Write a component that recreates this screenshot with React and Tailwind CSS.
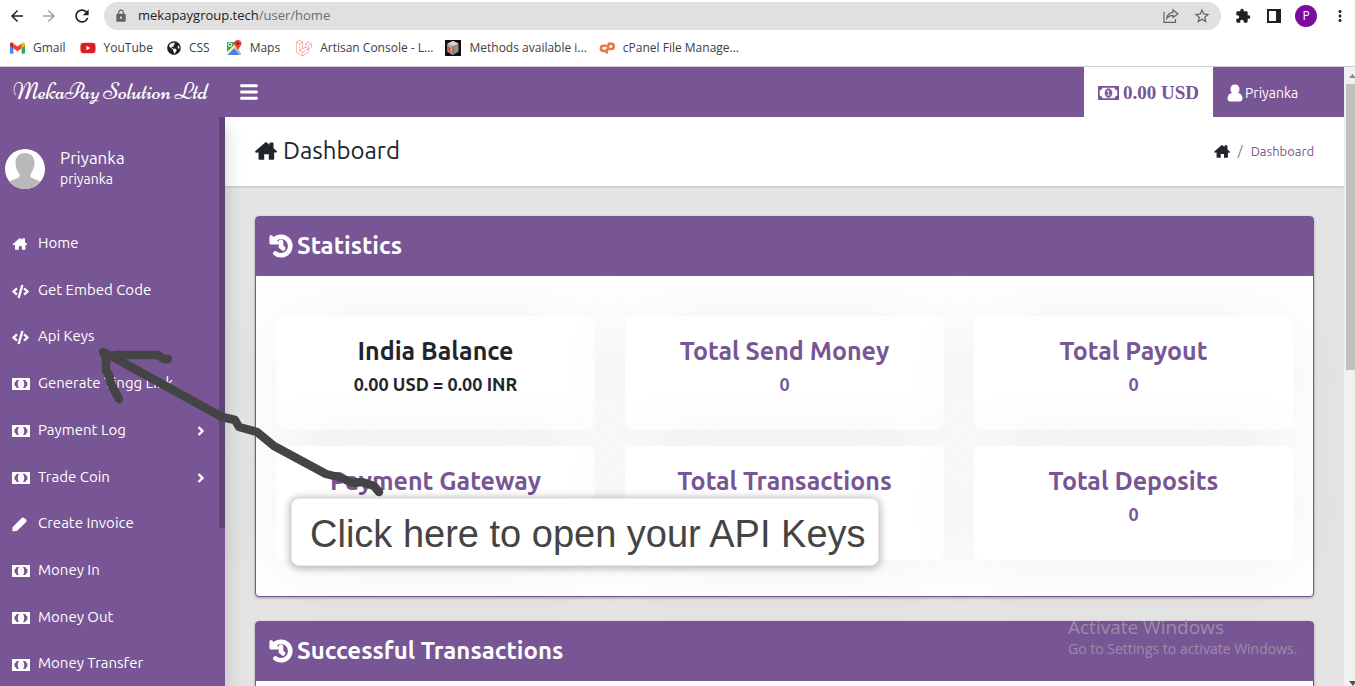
import React from "react";
import { FaYoutube, FaLaravel, FaGlobeAmericas, FaCode, FaHistory, FaBars } from "react-icons/fa";
import { MdArrowBack, MdArrowForward, MdRefresh, MdLock, MdStarBorder, MdExtension, MdMoreVert } from "react-icons/md";

function MoneyIcon({ className }) {
  return (
    <svg viewBox="0 256 1920 1280" className={className} fill="currentColor" stroke="currentColor" strokeWidth="50" aria-hidden="true">
      <path d="M768 1152h384v-96h-128v-448h-114l-148 137 77 80q42-37 55-57h2v288h-128v96zm512-256q0 70-21 142t-59.5 134-101.5 101-138 39-138-39-101.5-101-59.5-134-21-142 21-142 59.5-134 101.5-101 138-39 138 39 101.5 101 59.5 134 21 142zm512 256v-512q-106 0-181-75t-75-181h-1152q0 106-75 181t-181 75v512q106 0 181 75t75 181h1152q0-106 75-181t181-75zm128-832v1152q0 26-19 45t-45 19h-1792q-26 0-45-19t-19-45v-1152q0-26 19-45t45-19h1792q26 0 45 19t19 45z" />
    </svg>
  );
}

function SmallMoneyIcon({ className }) {
  return (
    <svg viewBox="0 0 18 12" className={className} aria-hidden="true">
      <rect width="18" height="12" rx="0.5" fill="currentColor" />
      <path d="M4.600 2Q4.200 3.800 2.600 4.200v3.600q1.600.4 2 2.200h8.800q.4-1.800 2-2.200V4.200q-1.600-.4-2-2.200Z" fill="#785594" />
      <ellipse cx="9" cy="6" rx="3.200" ry="4.600" fill="currentColor" />
      <path d="M8.600 3.800h.9v4.400h-.9Z" fill="#785594" opacity="0.150" />
    </svg>
  );
}

function HomeIcon({ className }) {
  return (
    <svg viewBox="0 0 22 18" className={className} fill="currentColor" aria-hidden="true">
      <path d="M10.200.5q.8-.6 1.600 0L14.500 2.800V1.300q0-.8.800-.8h2.400q.8 0 .8.800v4.900l3.200 2.900q.5.600 0 1.200t-1.200.3l-1.300-.3v6.400q0 1-1 1h-4.400v-5.400H9.200v5.400H4.500q-1 0-1-1v-6.400l-1.800.4q-.8 0-1.300-.5t0-1.200Z" />
    </svg>
  );
}

function PenIcon({ className }) {
  return (
    <svg viewBox="0 0 16 16" className={className} fill="currentColor" aria-hidden="true">
      <path d="M.8 10.600 9.800 1.500q1.200-1.100 2.500-.8l2.800 2q1 1.200-.3 2.800L5.800 14.400q-.6.600-1.400.6L1 15.300q-.6 0-.6-.6l.1-3.300q0-.5.3-.8Z" />
    </svg>
  );
}

function UserIcon({ className }) {
  return (
    <svg viewBox="0 0 16 18" className={className} fill="currentColor" aria-hidden="true">
      <path d="M8 .5c2.800 0 4.500 2.100 4.500 4.600 0 1.600-.6 3-1.500 3.900 3 .4 4.500 2.600 4.500 5.300 0 2-.9 3.200-2.500 3.200H3C1.400 17.500.5 16.300.5 14.300.5 11.600 2 9.400 5 9c-.9-.9-1.500-2.300-1.500-3.900C3.500 2.600 5.200.5 8 .5Z" />
    </svg>
  );
}

function GmailIcon() {
  return (
    <svg viewBox="0 0 16 12" className="w-[15px] h-3" aria-hidden="true">
      <path d="M0 2v9q0 1 1 1h2.600V4.500Z" fill="#4285f4" />
      <path d="M16 2v9q0 1-1 1h-2.600V4.500Z" fill="#34a853" />
      <path d="M12.400 1.200v5.100L16 3.600V1.800C16 .2 14.500-.4 13.200.5Z" fill="#fbbc04" />
      <path d="M3.600 6.300V1.100L8 4.500l4.400-3.400v5.200L8 9.600Z" fill="#ea4335" />
      <path d="M0 1.800v1.800l3.600 2.700V1.100L2.800.5C1.500-.4 0 .2 0 1.800Z" fill="#c5221f" />
    </svg>
  );
}

function MapsIcon() {
  return (
    <svg viewBox="0 0 16 16" className="size-4" aria-hidden="true">
      <path d="M1 2h13v13H1z" fill="#e8eaed" />
      <path d="M1 2h9L8 8l-7 6Z" fill="#34a853" />
      <path d="m1 14 6.500-6.500L14 15H2Z" fill="#4a80e8" />
      <path d="M0 13 11 2l2 1L1.500 15Z" fill="#fff3b0" />
      <path d="m8 8 1.500-1.500L15 13v2h-1Z" fill="#bdbdbd" />
      <circle cx="4" cy="4.700" r="1.800" fill="none" stroke="#fff" />
      <path d="M11.800 0c2.200 0 3.800 1.600 3.800 3.600 0 2.300-2.600 3.400-3.600 7-1-3.600-4-4.700-4-7C8 1.600 9.600 0 11.800 0Z" fill="#ea4335" />
      <circle cx="11.800" cy="3.600" r="1.300" fill="#811411" />
    </svg>
  );
}

function CubeIcon() {
  return (
    <svg viewBox="0 0 16 16" className="size-4" aria-hidden="true">
      <path d="M0 0h16v16H0z" fill="#111" />
      <path d="m8 1 5.500 2.500v8L8 15l-5.500-3.500v-8Z" fill="#9a8f88" />
      <path d="m8 1 5.500 2.500L8 6 2.500 3.500Z" fill="#d8d4cf" />
      <path d="M2.500 3.500 8 6v9l-5.500-3.500Z" fill="#b9aaa1" />
      <path d="M3 6.500 6 8l-1 2 2 3-4-2.500Z" fill="#c65a3a" />
      <path d="M8 6v8" stroke="#57504d" strokeWidth="0.800" />
    </svg>
  );
}

function CpanelIcon() {
  return (
    <svg viewBox="0 0 16 12" className="w-4 h-3" fill="none" stroke="#e8773f" strokeWidth="2.600" strokeLinecap="round" strokeLinejoin="round" aria-hidden="true">
      <path d="M6.600 3.800H4.400a2.600 2.600 0 0 0-.6 5.100H5.800" />
      <path d="M7.700 10.500 9.800 1.800h2.400a2.600 2.600 0 0 1 .2 5.200H11" />
    </svg>
  );
}

function ShareIcon() {
  return (
    <svg viewBox="0 0 16 14" className="w-4 h-3.5" fill="none" stroke="#5f6368" strokeWidth="1.200" aria-hidden="true">
      <path d="M1 3v10.300h11.500V10M10 1l5 3.800-5 3.700V6.300Q6 6.300 3.800 9.500 4.300 3.800 10 3.300Z" />
    </svg>
  );
}

const bookmarks = [
  { label: "Gmail", icon: <GmailIcon />, gap: "mr-3.5" },
  { label: "YouTube", icon: <FaYoutube className="w-4 h-[18px] text-[#e01b22]" />, gap: "mr-3.5" },
  { label: "CSS", icon: <FaGlobeAmericas className="size-3.5 text-[#202124]" />, gap: "mr-4" },
  { label: "Maps", icon: <MapsIcon />, gap: "mr-4" },
  { label: "Artisan Console - L...", icon: <FaLaravel className="size-4 text-[#f0786f]" />, gap: "mr-3" },
  { label: "Methods available i...", icon: <CubeIcon />, gap: "mr-3" },
  { label: "cPanel File Manage...", icon: <CpanelIcon />, gap: "" },
];

function BrowserBar() {
  return (
    <div className="h-[67px] shrink-0 border-b border-[#cfcfd2] bg-white font-['Segoe_UI','Open_Sans','Noto_Sans',sans-serif] text-[#202124]">
      <div className="flex h-8 items-center pl-2 pr-1.5">
        <button aria-label="Back" className="mr-3.5"><MdArrowBack className="size-[18px]" /></button>
        <button aria-label="Forward" className="mr-3.5"><MdArrowForward className="size-[18px] text-[#a0a2a5]" /></button>
        <button aria-label="Reload" className="mr-3"><MdRefresh className="size-5" /></button>
        <div className="flex h-7 flex-1 items-center rounded-full bg-[#e0e0e0] px-2.5">
          <MdLock className="mr-2.5 size-3.5 shrink-0 text-[#5f6368]" />
          <a href="#address" className="flex-1 text-[13px] text-[#202124]">mekapaygroup.tech<span className="text-[#6b6e72]">/user/home</span></a>
          <button aria-label="Share" className="mr-3.5"><ShareIcon /></button>
          <button aria-label="Bookmark"><MdStarBorder className="size-[18px] text-[#5f6368]" /></button>
        </div>
        <button aria-label="Extensions" className="ml-3.5 mr-4"><MdExtension className="size-4" /></button>
        <button aria-label="Side panel" className="mr-3.5 h-3.5 w-3.5 border-2 border-r-[5px] border-[#202124]" />
        <button className="mr-3.5 flex size-[22px] items-center justify-center rounded-full bg-[#7b0c9e] text-xs text-white">P</button>
        <button aria-label="Menu"><MdMoreVert className="size-[18px]" /></button>
      </div>
      <nav className="flex h-8 items-center pl-2.5 text-[12px] text-[#3c4043]">
        {bookmarks.map((b) => (
          <a key={b.label} href="#bookmark" className={`flex items-center gap-2 whitespace-nowrap ${b.gap}`}>
            {b.icon}
            {b.label}
          </a>
        ))}
      </nav>
    </div>
  );
}

const menu = [
  { label: "Home", icon: <HomeIcon className="w-4 h-3" /> },
  { label: "Get Embed Code", icon: <FaCode className="size-[17px]" /> },
  { label: "Api Keys", icon: <FaCode className="size-[17px]" /> },
  { label: "Generate Tingg Link", icon: <SmallMoneyIcon className="w-[18px] h-3" /> },
  { label: "Payment Log", icon: <SmallMoneyIcon className="w-[18px] h-3" />, more: true },
  { label: "Trade Coin", icon: <SmallMoneyIcon className="w-[18px] h-3" />, more: true },
  { label: "Create Invoice", icon: <PenIcon className="size-[15px]" /> },
  { label: "Money In", icon: <SmallMoneyIcon className="w-[18px] h-3" /> },
  { label: "Money Out", icon: <SmallMoneyIcon className="w-[18px] h-3" /> },
  { label: "Money Transfer", icon: <SmallMoneyIcon className="w-[18px] h-3" /> },
];

function Sidebar() {
  return (
    <aside className="relative z-10 w-[225px] shrink-0 bg-[#785594] text-white shadow-[0_8px_17px_rgba(0,0,0,0.2)]">
      <div className="flex items-center pl-[5px] pt-[31px]">
        <svg viewBox="0 0 40 40" className="size-10 rounded-full bg-white" aria-hidden="true">
          <path d="M20 4c6 0 9.500 4 9.500 10 0 4-1.500 8-4 11v3c3 2.500 9 3 11 6v6H3v-6c2-3 8-3.500 11.500-6v-3c-2.500-3-4-7-4-11C10.500 8 14 4 20 4Z" fill="#b9b9b9" />
        </svg>
        <div className="ml-[15px]">
          <p className="text-[17px] leading-5">Priyanka</p>
          <p className="text-sm leading-[22px]">priyanka</p>
        </div>
      </div>
      <ul className="mt-[30px] grid h-[467px] auto-rows-fr text-[15px]">
        {menu.map((m) => (
          <li key={m.label}>
            <a href="#menu" className="flex h-full items-center pl-3 pr-5">
              <span className="flex w-[26px] items-center pt-0.5">{m.icon}</span>
              <span className="flex-1 whitespace-nowrap">{m.label}</span>
              {m.more && (
                <svg viewBox="0 0 8 10" className="mt-0.5 w-2 h-2.5" fill="none" stroke="currentColor" strokeWidth="2.400" aria-hidden="true"><path d="m1.500 1 4 4-4 4" /></svg>
              )}
            </a>
          </li>
        ))}
      </ul>
      <div className="absolute right-0 top-0 h-[411px] w-1.5 bg-[#5e4377]" />
    </aside>
  );
}

const stats = [
  { title: "India Balance", value: "0.00 USD = 0.00 INR", dark: true },
  { title: "Total Send Money", value: "0" },
  { title: "Total Payout", value: "0" },
  { title: "Payment Gateway" },
  { title: "Total Transactions" },
  { title: "Total Deposits", value: "0" },
];

function Panel({ title, children }) {
  return (
    <section className="mb-6 rounded border border-[#785594] bg-white shadow-[0_1px_3px_rgba(0,0,0,0.3)]">
      <h2 className="flex h-[59px] items-center gap-[5px] bg-[#785594] pb-0.5 pl-3.5 text-2xl font-bold text-white">
        <FaHistory className="size-[22px] overflow-visible" stroke="currentColor" strokeWidth="44" />
        {title}
      </h2>
      {children}
    </section>
  );
}

function Callout() {
  return (
    <>
      <svg viewBox="0 0 400 200" className="pointer-events-none absolute left-0 top-[317px] z-20 h-[200px] w-[400px]" fill="none" stroke="#444" strokeWidth="8.500" strokeLinecap="round" strokeLinejoin="round" aria-hidden="true">
        <path d="m103 35 10 5 109 60 13 3 4 7 18 5 17 14 52 28 16 4 10 5 10-1 12 4 5 6" />
        <path d="M115 38h43l6 4h4M104 36l2 5v12l3 5 2 9 8 15" />
      </svg>
      <div className="absolute left-[291px] top-[498px] z-20 whitespace-nowrap rounded-lg border border-[#e8e8e8] bg-white pb-1 pl-[18px] pr-3 pt-2 font-['Liberation_Sans',Arial,sans-serif] text-[38px] leading-[54px] text-[#444] shadow-[0_1px_7px_2px_rgba(0,0,0,0.25)]">
        Click here to open your API Keys
      </div>
    </>
  );
}

export default function App() {
  return (
    <div className="relative flex h-screen flex-col overflow-hidden bg-[#e4e4e4] font-['Ubuntu','Noto_Sans',sans-serif] text-[#212529]">
      <BrowserBar />
      <div className="flex min-h-0 flex-1">
        <div className="flex min-w-0 flex-1 flex-col overflow-hidden">
          <header className="z-20 flex h-[50px] shrink-0 items-center bg-[#785594] text-white">
            <a href="#brand" className="w-[225px] whitespace-nowrap pl-[13px] font-['Niconne',cursive] text-[23px]">MekaPay Solution Ltd</a>
            <button aria-label="Toggle sidebar" className="ml-3.5"><FaBars className="size-5" /></button>
            <a href="#balance" className="ml-auto flex h-full items-center gap-1 bg-white px-3.5 pt-0.5 font-['Liberation_Serif',serif] text-[19px] font-bold text-[#785594]">
              <MoneyIcon className="w-[21px] h-3.5" />
              0.00 USD
            </a>
            <a href="#profile" className="flex h-full w-[131px] items-center gap-0.5 pl-3.5 pt-px text-sm">
              <UserIcon className="w-4 h-[18px]" />
              Priyanka
            </a>
          </header>
          <div className="flex min-h-0 flex-1">
            <Sidebar />
            <main className="min-w-0 flex-1">
              <div className="flex h-[69px] items-center justify-between bg-white px-[30px] shadow-[0_1px_2px_rgba(0,0,0,0.15)]">
                <h1 className="flex items-center gap-1.5 pb-0.5 text-2xl">
                  <HomeIcon className="w-[22px] h-[18px]" />
                  Dashboard
                </h1>
                <nav className="flex items-center gap-2 text-[13px]">
                  <HomeIcon className="w-4 h-[13px]" />
                  <span className="text-[#6c757d]">/</span>
                  <a href="#dashboard" className="text-[#785594]">Dashboard</a>
                </nav>
              </div>
              <div className="p-[30px]">
                <Panel title="Statistics">
                  <div className="grid grid-cols-3 gap-x-[30px] gap-y-4 px-5 pb-9 pt-10">
                    {stats.map((s) => (
                      <a key={s.title} href="#stat" className={`relative h-[114px] rounded-lg bg-white pt-5 text-center font-bold shadow-[0_5px_83px_rgba(9,5,29,0.06)] ${s.dark ? "text-[#212529]" : "text-[#785594]"}`}>
                        <h3 className="text-[25px] leading-[30px]">{s.title}</h3>
                        {s.value && <p className="mt-1.5 text-lg leading-6">{s.value}</p>}
                      </a>
                    ))}
                  </div>
                </Panel>
                <Panel title="Successful Transactions">
                  <div className="h-40" />
                </Panel>
              </div>
            </main>
          </div>
        </div>
        <div className="flex w-[11px] shrink-0 flex-col items-end bg-[#f1f1f1]">
          <svg viewBox="0 0 9 17" className="w-[9px] h-[17px]" aria-hidden="true"><path d="m3 11 3.500-4 3.500 4Z" fill="#8a8a8a" /></svg>
          <div className="h-[286px] w-[9px] bg-[#c1c1c1]" />
          <svg viewBox="0 0 9 8" className="mt-auto w-[9px] h-2" aria-hidden="true"><path d="M3 3h6v2L7 8Z" fill="#505050" /></svg>
        </div>
      </div>
      <Callout />
      <div className="pointer-events-none absolute bottom-[27px] left-[1068px] z-30 font-['Segoe_UI','Open_Sans',sans-serif] text-[#9b8da8]">
        <p className="text-[19px] leading-6">Activate Windows</p>
        <p className="text-sm leading-5">Go to Settings to activate Windows.</p>
      </div>
    </div>
  );
}
